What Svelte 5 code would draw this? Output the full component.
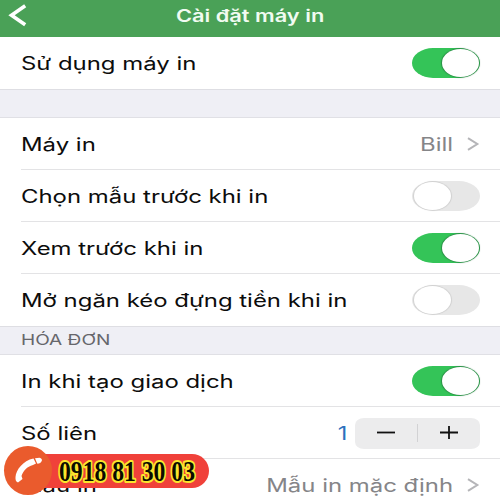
<script lang="ts">
  type Row = {
    label: string;
    kind: 'toggle' | 'link' | 'stepper';
    on?: boolean;
    value?: string;
  };

  let general: Row[] = $state([
    { label: 'Máy in', kind: 'link', value: 'Bill' },
    { label: 'Chọn mẫu trước khi in', kind: 'toggle', on: false },
    { label: 'Xem trước khi in', kind: 'toggle', on: true },
    { label: 'Mở ngăn kéo đựng tiền khi in', kind: 'toggle', on: false },
  ]);

  let invoice: Row[] = $state([
    { label: 'In khi tạo giao dịch', kind: 'toggle', on: true },
    { label: 'Số liên', kind: 'stepper' },
    { label: 'Mẫu in', kind: 'link', value: 'Mẫu in mặc định' },
  ]);

  let enabled = $state(true);
  let copies = $state(1);
</script>

{#snippet toggle(on: boolean, flip: () => void)}
  <button class="toggle" class:on role="switch" aria-checked={on} aria-label="toggle" onclick={flip}>
    <span class="knob"></span>
  </button>
{/snippet}

{#snippet list(rows: Row[])}
  <div class="list">
    {#each rows as row}
      <div class="row">
        <span class="label">{row.label}</span>
        {#if row.kind === 'toggle'}
          {@render toggle(!!row.on, () => (row.on = !row.on))}
        {:else if row.kind === 'link'}
          <span class="value">{row.value}</span>
          <svg class="chevron" width="13" height="14" viewBox="0 0 13 14">
            <path d="M1 1.2 L10.3 7 L1 12.8" />
          </svg>
        {:else}
          <span class="count">{copies}</span>
          <div class="stepper">
            <button aria-label="minus" onclick={() => (copies = Math.max(1, copies - 1))}>
              <svg width="20" height="14" viewBox="0 0 20 14"><path d="M1 6.5H19" /></svg>
            </button>
            <i></i>
            <button aria-label="plus" onclick={() => (copies += 1)}>
              <svg width="20" height="14" viewBox="0 0 20 14"><path d="M1 6.5H19M10 0V13" /></svg>
            </button>
          </div>
        {/if}
      </div>
    {/each}
  </div>
{/snippet}

<div class="screen">
  <header>
    <svg class="back" width="20" height="24" viewBox="0 0 20 24">
      <path d="M17.2 2.8 L3.5 12.3 L17.2 21.8" />
    </svg>
    <h1>Cài đặt máy in</h1>
  </header>

  <div class="list">
    <div class="row">
      <span class="label">Sử dụng máy in</span>
      {@render toggle(enabled, () => (enabled = !enabled))}
    </div>
  </div>
  <div class="section"></div>
  {@render list(general)}
  <div class="section"><span>HÓA ĐƠN</span></div>
  {@render list(invoice)}

  <div class="hotline">
    <div class="pill">
      <svg width="140" height="30" viewBox="0 0 140 30">
        <text x="3" y="24.5" textLength="136" lengthAdjust="spacingAndGlyphs">0918 81 30 03</text>
      </svg>
    </div>
    <div class="phone">
      <svg width="48" height="49" viewBox="0 0 48 49">
        <path d="M11.5 31 C12 24 19 14.5 29.5 12.5 L32 17.5 L29 19 C23 20.5 19 25 17.5 30 L18.5 33 L14 36.5 C12 36 11.3 34 11.5 31 Z" />
        <path d="M31 12.2 L35.5 11.8 Q38.5 12.5 37.8 15 Q36.5 18 33.2 17.6 Z" />
      </svg>
    </div>
  </div>
</div>

<style>
  :global(body) { margin: 0; overflow: hidden; }
  .screen {
    position: relative; width: 500px; height: 500px; overflow: hidden;
    background: #fff; color: #0c0c0c; font-family: Inter, "Noto Sans", sans-serif;
  }
  header {
    position: relative; box-sizing: border-box; height: 37px; padding-bottom: 6px;
    display: flex; align-items: center; justify-content: center;
    background: #4aa157;
  }
  .back { position: absolute; left: 8px; top: 3px; }
  .back path { fill: none; stroke: #fff; stroke-width: 3.6; }
  h1 {
    margin: 0; font-size: 16.8px; line-height: 30px; font-weight: 600; color: #f1fbf1;
    transform: scaleX(1.3); white-space: nowrap;
  }

  .row {
    box-sizing: border-box; height: 52px; margin-left: 21px; padding: 1px 20px 0 0;
    display: flex; align-items: center; border-bottom: 1px solid #e3e3e5;
  }
  .row:last-child { border-bottom-color: transparent; }
  .label, .value, .section span {
    font-size: 18.2px; line-height: 26px; white-space: nowrap;
    transform: scaleX(1.315); transform-origin: left;
  }
  .label { margin-right: auto; }
  .value { color: #858588; transform-origin: right; margin-right: 14px; }
  .chevron path { fill: none; stroke: #b5b5b8; stroke-width: 2; }

  .section {
    box-sizing: border-box; height: 29px; padding-left: 21px;
    display: flex; align-items: center;
    background: #efeff5; border-top: 1px solid #dedee3; border-bottom: 1px solid #e0e0e5;
  }
  .section span { font-size: 14.5px; color: #66666b; margin-top: -1px; }

  button { border: 0; padding: 0; background: none; font: inherit; }
  .toggle {
    box-sizing: border-box; width: 68px; height: 30px; padding: 1px 1.5px;
    display: flex; border-radius: 21px / 15px; background: #e7e7e7;
  }
  .toggle.on { background: #34c458; justify-content: flex-end; }
  .knob {
    width: 37px; height: 28px; border-radius: 50%; background: #fff;
    box-shadow: 0 0 1px 1px rgba(0, 0, 0, .1);
  }
  .on .knob { box-shadow: 0 0 1px 1px rgba(30, 90, 50, .5); }

  .count {
    font-size: 18.2px; line-height: 26px; color: #2e70bd;
    transform: scaleX(1.3); transform-origin: right; margin-right: 8px;
  }
  .stepper {
    width: 125px; height: 31px; display: flex; align-items: center;
    border-radius: 9px / 7px; background: #ececed;
  }
  .stepper button { flex: 1; display: flex; align-items: center; justify-content: center; }
  .stepper i { width: 1px; height: 18px; background: #d2d2d4; }
  .stepper path { stroke: #111; stroke-width: 1.8; }

  /* floating call badge, sits over the last row */
  .hotline { position: absolute; left: 4px; top: 446px; width: 205px; height: 49px; }
  .pill {
    position: absolute; left: 24px; top: 8px; right: 0; height: 34px;
    display: flex; align-items: center; padding-left: 28px; box-sizing: border-box;
    border-radius: 0 18px 18px 0; background: #f0413a;
  }
  .pill text {
    font-family: "Liberation Serif", serif; font-weight: 700; font-size: 29px;
    fill: #0b0b00; stroke: #fbe62c; stroke-width: 4px; stroke-linejoin: round;
    paint-order: stroke;
  }
  .pill svg { overflow: visible; }
  .phone {
    position: absolute; left: 0; top: 0; width: 48px; height: 49px;
    border-radius: 50%; background: #ea5b2d;
  }
  .phone path { fill: #fff; }
</style>
